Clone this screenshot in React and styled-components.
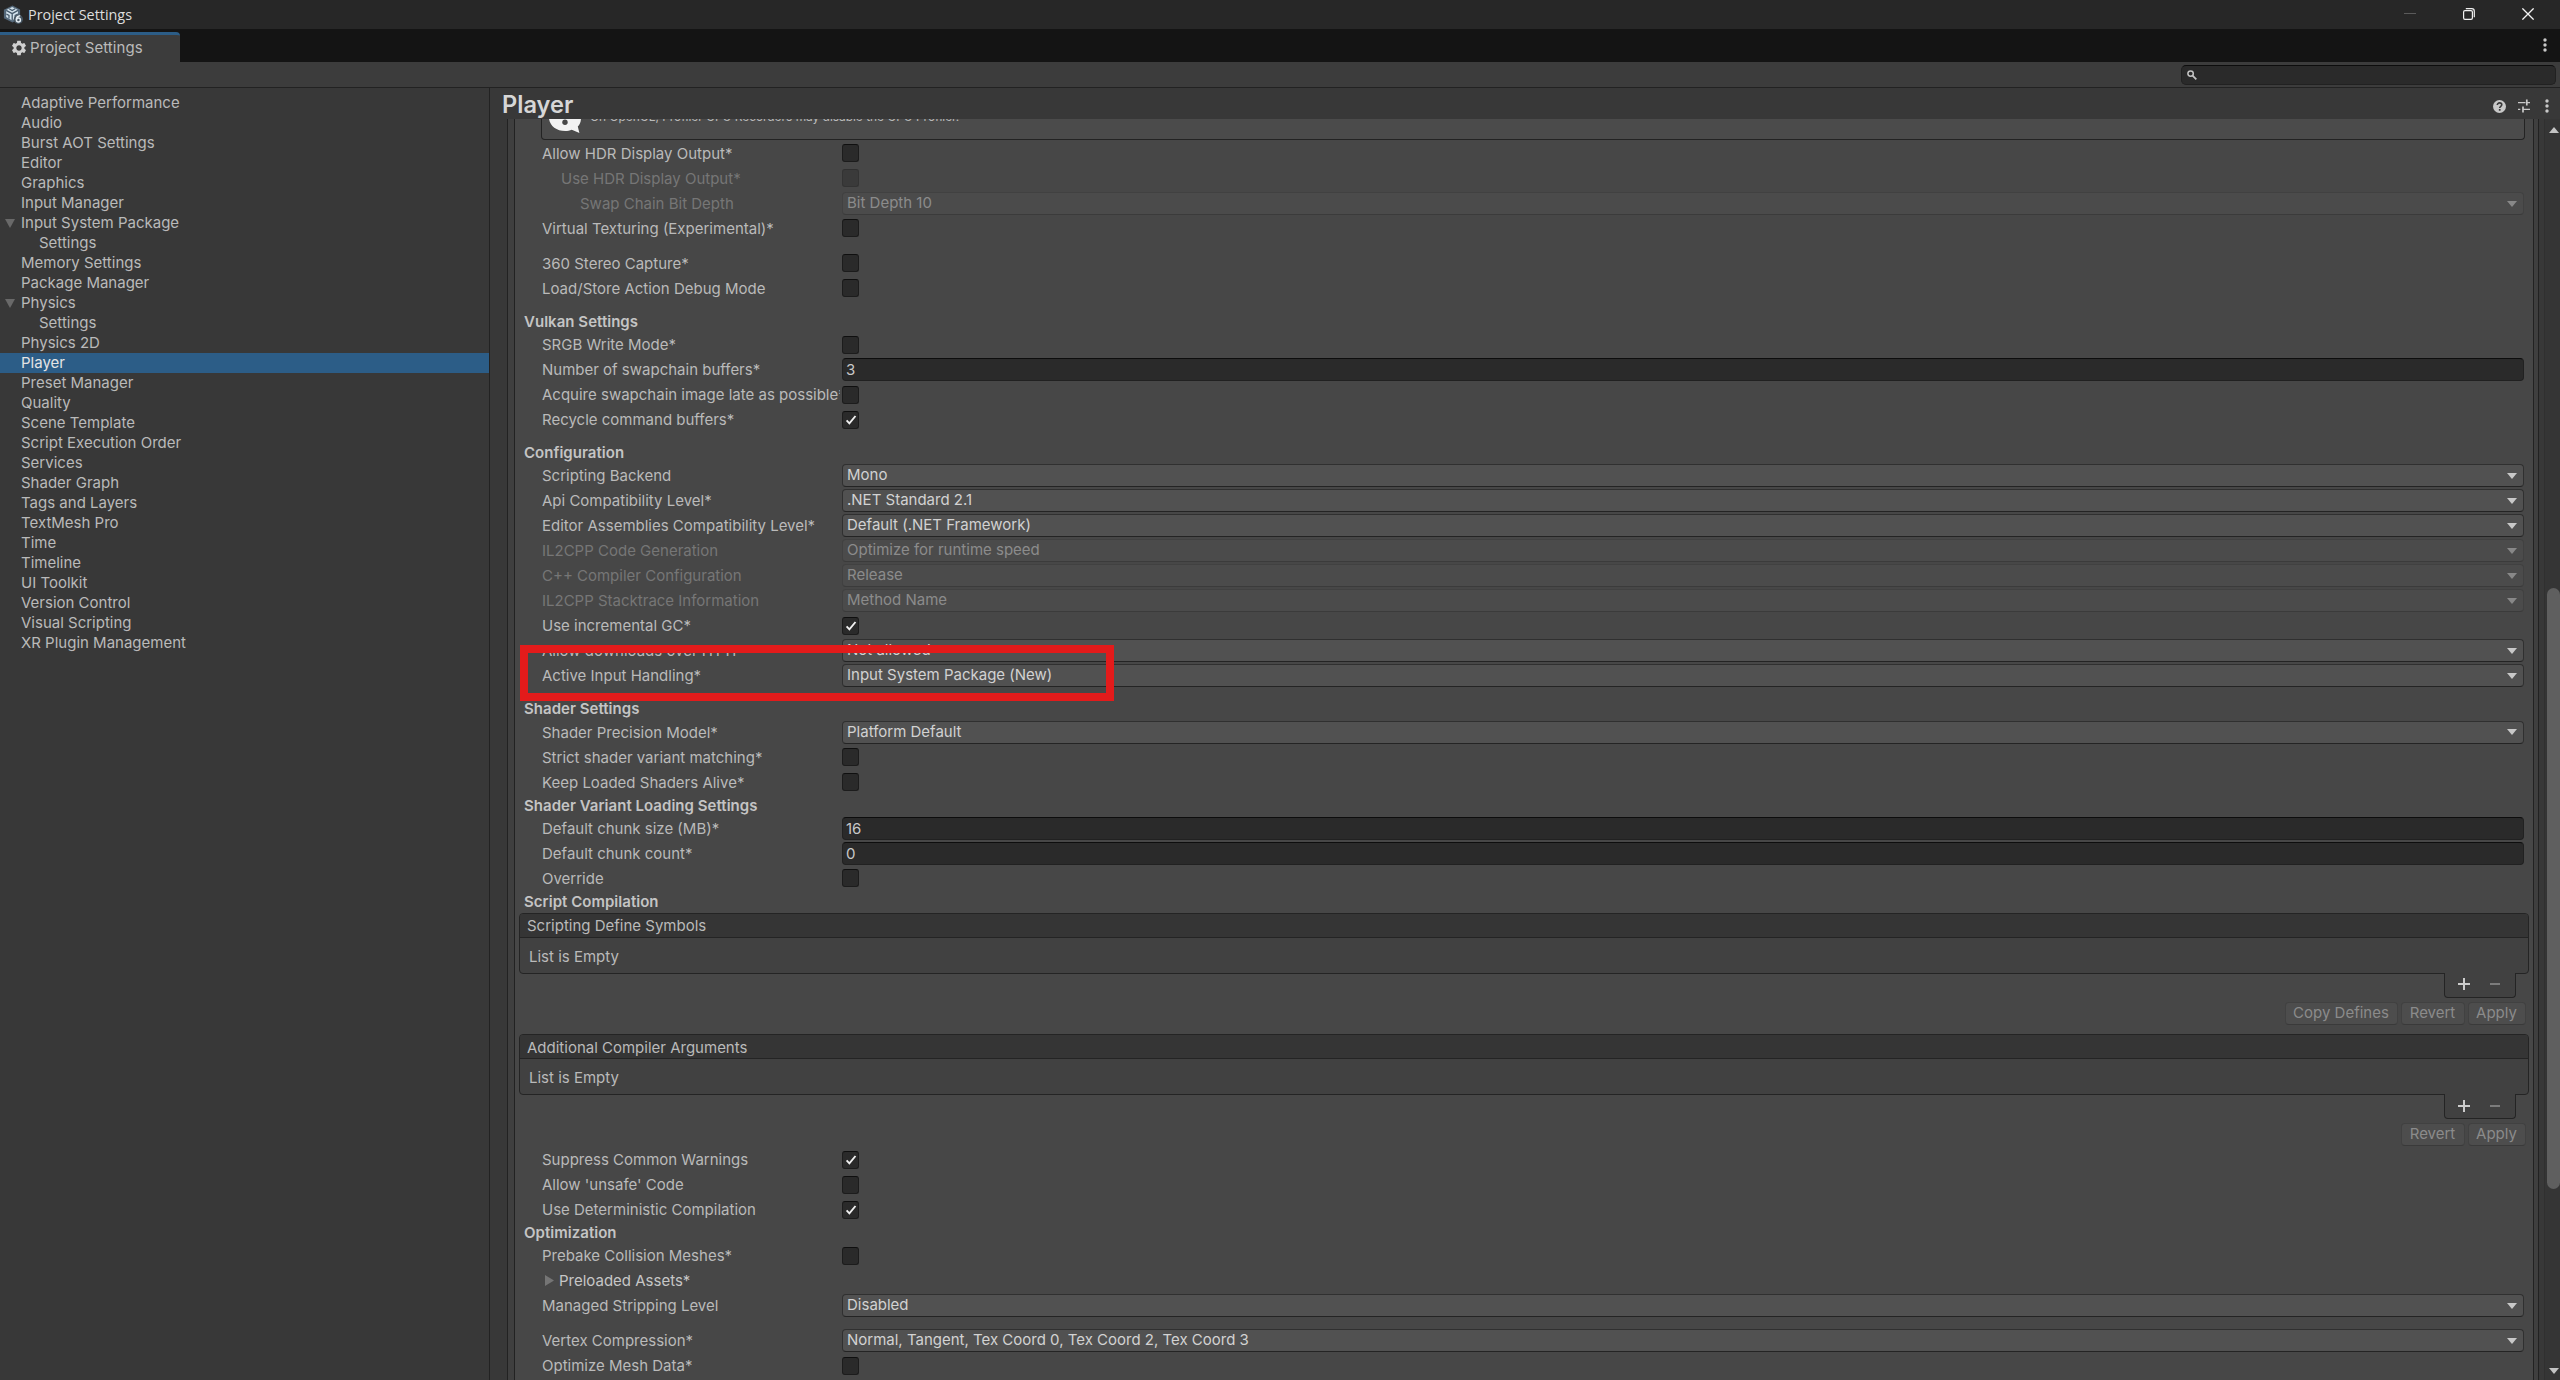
import styled, { createGlobalStyle, css } from 'styled-components';
import { MdSettings } from 'react-icons/md';

const colors = {
   titleBar: '#272727',
   tabBar: '#141414',
   toolbar: '#3c3c3c',
   panel: '#383838',
   frame: '#3f3f3f',
   inner: '#474747',
   line: '#222222',
   text: '#bababa',
   bright: '#d2d2d2',
   muted: '#767676',
   accent: '#2c5d87',
   mark: '#e31b1b',
};

const GlobalStyle = createGlobalStyle`
   * {
      box-sizing: border-box;
   }

   body {
      margin: 0;
      background: ${colors.panel};
      color: ${colors.text};
      font-family: Inter, 'Liberation Sans', sans-serif;
      font-size: 15px;
      overflow: hidden;
   }

   svg {
      display: block;
      flex: none;
   }
`;

const Window = styled.div`
   display: flex;
   flex-direction: column;
   width: 2560px;
   height: 1380px;
   overflow: hidden;
`;

const TitleBar = styled.header`
   display: flex;
   align-items: center;
   height: 29px;
   padding: 0 26px 0 3px;
   background: ${colors.titleBar};
`;

const WindowTitle = styled.span`
   flex: 1;
   margin-left: 5px;
   color: #dedede;
   font-family: 'Open Sans', sans-serif;
   font-size: 14.4px;
   line-height: 28px;
`;

const WindowButtons = styled.div`
   display: flex;
   gap: 47px;
   margin-bottom: 1px;
`;

const TabBar = styled.div`
   display: flex;
   align-items: flex-end;
   justify-content: space-between;
   height: 33px;
   padding-right: 13px;
   background: ${colors.tabBar};
`;

const Tab = styled.div`
   display: flex;
   align-items: center;
   width: 180px;
   height: 30px;
   padding: 0 0 1px 10px;
   border-top: 3px solid ${colors.accent};
   border-radius: 0 4px 0 0;
   background: ${colors.toolbar};
   line-height: 25px;

   span {
      margin-left: 2px;
      padding-bottom: 2px;
      letter-spacing: 0.08px;
   }
`;

const TabMenu = styled.div`
   display: flex;
   align-items: center;
   height: 34px;
`;

const Toolbar = styled.div`
   display: flex;
   justify-content: flex-end;
   height: 26px;
   padding: 3px 4px 0 0;
   border-bottom: 1px solid ${colors.line};
   background: ${colors.toolbar};
`;

const Search = styled.div`
   display: flex;
   align-items: center;
   width: 375px;
   height: 20px;
   padding-left: 5px;
   border: 1px solid #212121;
   border-top-color: #0d0d0d;
   border-radius: 5px;
   background: #2a2a2a;
`;

const Body = styled.div`
   display: flex;
   flex: 1;
   min-height: 0;
`;

const Sidebar = styled.nav`
   width: 490px;
   padding-top: 5px;
   border-right: 1px solid ${colors.line};
`;

const SidebarItem = styled.div`
   display: flex;
   align-items: center;
   height: 20px;
   padding-left: ${props => (props.$child ? 39 : 5)}px;
   line-height: 20px;
   ${props => props.$active && css`
      background: ${colors.accent};
      color: #e4e4e4;
   `}
`;

const Foldout = styled.span`
   width: 16px;
`;

const Main = styled.main`
   display: flex;
   flex: 1;
   flex-direction: column;
   min-width: 0;
`;

const MainHeader = styled.div`
   display: flex;
   align-items: center;
   height: 31px;
   padding: 2px 11px 0 12px;

   h1 {
      flex: 1;
      margin: 0;
      color: #d6d6d6;
      font-size: 23.6px;
      font-weight: 600;
      line-height: 29px;
   }
`;

const HeaderIcons = styled.div`
   display: flex;
   align-items: center;
   padding-top: 3px;

   svg + svg {
      margin-left: 12px;
   }

   svg:last-child {
      margin-left: 15px;
   }
`;

const ScrollArea = styled.div`
   display: flex;
   flex: 1;
   min-height: 0;
   padding-left: 17px;
`;

const OuterFrame = styled.div`
   flex: 1;
   min-width: 0;
   padding: 0 4px 0 6px;
   border: solid ${colors.line};
   border-width: 0 1px;
   background: ${colors.frame};
`;

const InnerFrame = styled.div`
   position: relative;
   height: 100%;
   border: solid ${colors.line};
   border-width: 0 1px;
   background: ${colors.inner};
   overflow: hidden;
`;

const Scrollbar = styled.div`
   display: flex;
   flex-direction: column;
   align-items: center;
   width: 16px;
   margin-left: 5px;
   padding: 8px 0 6px 2px;
   border-left: 1px solid #303030;
   background: #353535;
`;

const Thumb = styled.div`
   width: 13px;
   height: 601px;
   margin: 455px 0 auto;
   border-radius: 7px;
   background: #5f5f5f;
`;

const HelpBox = styled.div`
   display: flex;
   height: 21px;
   margin: 0 8px 2px 26px;
   padding-left: 7px;
   border: 1px solid #232323;
   border-top: none;
   border-radius: 0 0 4px 4px;
   background: #4b4b4b;
   overflow: hidden;

   p {
      margin: -10px 0 0 8px;
      font-size: 11.9px;
      line-height: 16px;
   }
`;

const Row = styled.div`
   display: flex;
   height: 25px;
   margin-top: ${props => props.$gap || 0}px;
   padding: 0 9px 0 27px;
   color: ${props => (props.$disabled ? colors.muted : colors.text)};
`;

const Label = styled.div`
   display: flex;
   flex: none;
   width: 298px;
   margin-right: 2px;
   padding-left: ${props => (props.$indent || 0) * 19}px;
   line-height: 23px;
   white-space: nowrap;
   overflow: hidden;
   ${props => props.$foldout && css`
      align-items: center;
      height: 23px;
      padding-left: 3px;
      gap: 5px;
      color: #c6c6c6;
   `}
`;

const CheckBox = styled.div`
   display: flex;
   align-items: center;
   justify-content: center;
   width: 17px;
   height: 18px;
   margin-top: 2.2px;
   border: 1px solid ${props => (props.$disabled ? '#333333' : '#1c1c1c')};
   border-top-color: ${props => (props.$disabled ? '#303030' : '#0f0f0f')};
   border-radius: 3px;
   background: ${props => (props.$disabled ? '#3a3a3a' : '#2a2a2a')};
`;

const Dropdown = styled.div`
   display: flex;
   flex: 1;
   align-items: center;
   justify-content: space-between;
   height: 23px;
   padding: 0 6px 0 4px;
   border: 1px solid ${props => (props.$disabled ? '#414141' : '#303030')};
   border-bottom-color: ${props => (props.$disabled ? '#3b3b3b' : '#242424')};
   border-radius: 4px;
   background: ${props => (props.$disabled ? '#4b4b4b' : '#515151')};
   color: ${props => (props.$disabled ? '#8b8b8b' : colors.bright)};
   line-height: 20px;

   span {
      height: 21px;
   }
`;

const NumberField = styled.div`
   flex: 1;
   height: 23px;
   padding-left: 3px;
   border: 1px solid #212121;
   border-top-color: #0d0d0d;
   border-radius: 4px;
   background: #2a2a2a;
   color: #c8c8c8;
   line-height: 22px;
`;

const Heading = styled.h2`
   height: 21px;
   margin: ${props => props.$gap || 0}px 0 0 9px;
   color: #c4c4c4;
   font-size: 15px;
   font-weight: 600;
   letter-spacing: 0.03px;
   line-height: 19px;
`;

const ListBox = styled.section`
   height: 61px;
   margin: ${props => props.$gap || 0}px 4px 0;
   border: 1px solid #242424;
   border-radius: 4px;
   background: #414141;
   line-height: 23px;
`;

const ListTitle = styled.div`
   height: 24px;
   padding: ${props => (props.$lowered ? 1 : 0)}px 0 0 7px;
   border-bottom: 1px solid #242424;
   border-radius: 3px 3px 0 0;
   background: #353535;
`;

const ListEmpty = styled.div`
   padding: 7px 0 0 9px;
`;

const ListFooter = styled.div`
   position: relative;
   display: flex;
   align-items: center;
   gap: 19px;
   width: 72px;
   height: 25px;
   margin: -1px 17px 0 auto;
   padding: 0 0 1px 12px;
   border: 1px solid #242424;
   border-top: none;
   border-radius: 0 0 4px 4px;
   background: #414141;
`;

const ButtonBar = styled.div`
   display: flex;
   justify-content: flex-end;
   gap: 3px;
   margin: ${props => props.$gap || 4.4}px 7.5px 0 0;
`;

const Button = styled.div`
   width: ${props => props.$width}px;
   height: 23px;
   border: 1px solid #414141;
   border-bottom-color: #3a3a3a;
   border-radius: 4px;
   background: #4d4d4d;
   color: #8b8b8b;
   line-height: 20px;
   text-align: center;
`;

// red marker drawn over the settings
const Highlight = styled.div`
   position: absolute;
   top: 526px;
   left: 5px;
   width: 594px;
   height: 56px;
   border: 8px solid ${colors.mark};
`;

const sidebarItems = [
   'Adaptive Performance',
   'Audio',
   'Burst AOT Settings',
   'Editor',
   'Graphics',
   'Input Manager',
   { name: 'Input System Package', open: true },
   { name: 'Settings', child: true },
   'Memory Settings',
   'Package Manager',
   { name: 'Physics', open: true },
   { name: 'Settings', child: true },
   'Physics 2D',
   { name: 'Player', active: true },
   'Preset Manager',
   'Quality',
   'Scene Template',
   'Script Execution Order',
   'Services',
   'Shader Graph',
   'Tags and Layers',
   'TextMesh Pro',
   'Time',
   'Timeline',
   'UI Toolkit',
   'Version Control',
   'Visual Scripting',
   'XR Plugin Management',
].map(item => (typeof item === 'string' ? { name: item } : item));

const displaySettings = [
   { label: 'Allow HDR Display Output*', checked: false },
   { label: 'Use HDR Display Output*', checked: false, indent: 1, disabled: true },
   { label: 'Swap Chain Bit Depth', option: 'Bit Depth 10', indent: 2, disabled: true },
   { label: 'Virtual Texturing (Experimental)*', checked: false },
   { label: '360 Stereo Capture*', checked: false, gap: 10 },
   { label: 'Load/Store Action Debug Mode', checked: false },
   { heading: 'Vulkan Settings', gap: 10.4 },
   { label: 'SRGB Write Mode*', checked: false },
   { label: 'Number of swapchain buffers*', value: '3' },
   { label: 'Acquire swapchain image late as possible*', checked: false },
   { label: 'Recycle command buffers*', checked: true },
   { heading: 'Configuration', gap: 10 },
   { label: 'Scripting Backend', option: 'Mono' },
   { label: 'Api Compatibility Level*', option: '.NET Standard 2.1' },
   { label: 'Editor Assemblies Compatibility Level*', option: 'Default (.NET Framework)' },
   { label: 'IL2CPP Code Generation', option: 'Optimize for runtime speed', disabled: true },
   { label: 'C++ Compiler Configuration', option: 'Release', disabled: true },
   { label: 'IL2CPP Stacktrace Information', option: 'Method Name', disabled: true },
   { label: 'Use incremental GC*', checked: true },
   { label: 'Allow downloads over HTTP*', option: 'Not allowed' },
   { label: 'Active Input Handling*', option: 'Input System Package (New)' },
   { heading: 'Shader Settings', gap: 10 },
   { label: 'Shader Precision Model*', option: 'Platform Default', gap: 0.5 },
   { label: 'Strict shader variant matching*', checked: false },
   { label: 'Keep Loaded Shaders Alive*', checked: false },
   { heading: 'Shader Variant Loading Settings' },
   { label: 'Default chunk size (MB)*', value: '16' },
   { label: 'Default chunk count*', value: '0' },
   { label: 'Override', checked: false },
   { heading: 'Script Compilation' },
];

const compilerSettings = [
   { label: 'Suppress Common Warnings', checked: true, gap: 2 },
   { label: "Allow 'unsafe' Code", checked: false },
   { label: 'Use Deterministic Compilation', checked: true },
   { heading: 'Optimization' },
   { label: 'Prebake Collision Meshes*', checked: false },
   { label: 'Preloaded Assets*', foldout: true },
   { label: 'Managed Stripping Level', option: 'Disabled' },
   { label: 'Vertex Compression*', option: 'Normal, Tangent, Tex Coord 0, Tex Coord 2, Tex Coord 3', gap: 10 },
   { label: 'Optimize Mesh Data*', checked: false },
];

const ArrowDown = ({ color = '#c4c4c4', width = 10, height = 6 }) => (
   <svg width={width} height={height} viewBox="0 0 10 6" preserveAspectRatio="none">
      <path d="M0 0h10L5 6z" fill={color} />
   </svg>
);

const ArrowUp = () => (
   <svg width="10" height="6" viewBox="0 0 10 6">
      <path d="M0 6h10L5 0z" fill="#c4c4c4" />
   </svg>
);

const ArrowRight = () => (
   <svg width="9" height="11" viewBox="0 0 9 11">
      <path d="M0 0v11l9-5.5z" fill="#757575" />
   </svg>
);

const Kebab = () => (
   <svg width="4" height="14" viewBox="0 0 4 14" fill="#c8c8c8">
      <circle cx="2" cy="2" r="1.7" />
      <circle cx="2" cy="7" r="1.7" />
      <circle cx="2" cy="12" r="1.7" />
   </svg>
);

const UnityIcon = () => (
   <svg width="20" height="20" viewBox="0 0 20 20">
      <path d="M9.5 0.6l7.6 4v8.8l-7.6 4.2-8.6-4.4V4.8z" fill="#54687a" />
      <path d="M9.2 2l5.8 3v7l-5.8 3.4L3.2 12V5z" fill="#d3e2ec" />
      <path d="M9.2 8.6v6.8M9.2 8.6l5.8-3.2M9.2 8.6L3.2 5.4M6.2 3.8l3 1.7 3-1.7M3.4 9l2.6 1.5v3M15 9l-2.8 1.5v3" fill="none" stroke="#465a6c" strokeWidth="1.3" />
      <circle cx="15.4" cy="14.3" r="4.6" fill="#465562" />
      <path d="M17.2 10.8c-2.6 0.2-3.8 1.8-3.8 3.9" fill="none" stroke="#e4edf3" strokeWidth="1.6" />
      <circle cx="15.4" cy="15" r="2" fill="none" stroke="#e4edf3" strokeWidth="1.5" />
   </svg>
);

const MinimizeIcon = () => (
   <svg width="12" height="12" viewBox="0 0 12 12">
      <path d="M0 5.5h12" stroke="#5a5a5a" />
   </svg>
);

const RestoreIcon = () => (
   <svg width="12" height="12" viewBox="0 0 12 12" fill="none" stroke="#f0f0f0" strokeWidth="1.2">
      <rect x="0.6" y="2.6" width="8.8" height="8.8" rx="1.4" />
      <path d="M2.8 0.7h6c1.5 0 2.5 1 2.5 2.5v6" />
   </svg>
);

const CloseIcon = () => (
   <svg width="12" height="12" viewBox="0 0 12 12">
      <path d="M0.4 0.4l11.2 11.2M11.6 0.4L0.4 11.6" stroke="#f4f4f4" strokeWidth="1.3" />
   </svg>
);

const SearchIcon = () => (
   <svg width="10" height="10" viewBox="0 0 10 10" fill="none" stroke="#c4c4c4">
      <circle cx="3.6" cy="3.6" r="2.7" strokeWidth="1.5" />
      <path d="M5.6 5.6l3.7 3.7" strokeWidth="1.8" />
   </svg>
);

const HelpIcon = () => (
   <svg width="13" height="13" viewBox="0 0 12 12">
      <circle cx="6" cy="6" r="6" fill="#c8c8c8" />
      <path d="M4 4.7c0-1.3 0.9-2 2.1-2s2 0.7 2 1.7c0 1.4-1.9 1.5-1.9 3" fill="none" stroke="#383838" strokeWidth="1.5" />
      <rect x="5.4" y="8.3" width="1.6" height="1.6" fill="#383838" />
   </svg>
);

const PresetIcon = () => (
   <svg width="12" height="14" viewBox="0 0 12 14" stroke="#c8c8c8" fill="none">
      <path d="M0 3.6h7.5M9 3.6h3M0 10.4h2.3M5 10.4h7" strokeWidth="1.3" />
      <path d="M8.8 0.6v6M5 7.4v6" strokeWidth="1.7" />
   </svg>
);

const CheckIcon = () => (
   <svg width="12" height="12" viewBox="0 0 12 12">
      <path d="M1.6 6.3l2.8 3L10.5 2" fill="none" stroke="#f0f0f0" strokeWidth="1.9" />
   </svg>
);

const BubbleIcon = () => (
   <svg width="33" height="15" viewBox="0 0 33 15">
      <path d="M0 0h32c-0.2 3.4-1.6 6-3.2 7.6l1.6 6.4-7.6-3.2c-2 0.9-4.3 1.3-6.5 1.3C7.5 12.1 1.2 7 0 0z" fill="#f2f2f2" />
      <circle cx="16" cy="3.3" r="2.7" fill="#474747" />
   </svg>
);

const PlusIcon = () => (
   <svg width="14" height="14" viewBox="0 0 14 14">
      <path d="M1 7h12M7 1v12" stroke="#cccccc" strokeWidth="2" />
   </svg>
);

const MinusIcon = () => (
   <svg width="10" height="14" viewBox="0 0 10 14">
      <path d="M0 7h10" stroke="#7c7c7c" strokeWidth="2" />
   </svg>
);

const Field = ({ item }) => {
   if (item.option) {
      return (
         <Dropdown $disabled={item.disabled}>
            <span>{item.option}</span>
            <ArrowDown color={item.disabled ? '#888888' : '#c8c8c8'} />
         </Dropdown>
      );
   }
   if (item.value) {
      return <NumberField>{item.value}</NumberField>;
   }
   if (item.foldout) {
      return null;
   }
   return <CheckBox $disabled={item.disabled}>{item.checked && <CheckIcon />}</CheckBox>;
};

const Settings = ({ items }) =>
   items.map(item =>
      item.heading ? (
         <Heading key={item.heading} $gap={item.gap}>
            {item.heading}
         </Heading>
      ) : (
         <Row key={item.label} $gap={item.gap} $disabled={item.disabled}>
            <Label $indent={item.indent} $foldout={item.foldout}>
               {item.foldout && <ArrowRight />}
               {item.label}
            </Label>
            <Field item={item} />
         </Row>
      )
   );

const EmptyList = ({ title, gap, lowered }) => (
   <>
      <ListBox $gap={gap}>
         <ListTitle $lowered={lowered}>{title}</ListTitle>
         <ListEmpty>List is Empty</ListEmpty>
      </ListBox>
      <ListFooter>
         <PlusIcon />
         <MinusIcon />
      </ListFooter>
   </>
);

export default function App() {
   return (
      <Window>
         <GlobalStyle />
         <TitleBar>
            <UnityIcon />
            <WindowTitle>Project Settings</WindowTitle>
            <WindowButtons>
               <MinimizeIcon />
               <RestoreIcon />
               <CloseIcon />
            </WindowButtons>
         </TitleBar>
         <TabBar>
            <Tab>
               <MdSettings size={18} color="#d0d0d0" />
               <span>Project Settings</span>
            </Tab>
            <TabMenu>
               <Kebab />
            </TabMenu>
         </TabBar>
         <Toolbar>
            <Search>
               <SearchIcon />
            </Search>
         </Toolbar>
         <Body>
            <Sidebar>
               {sidebarItems.map((item, index) => (
                  <SidebarItem key={index} $child={item.child} $active={item.active}>
                     {!item.child && (
                        <Foldout>{item.open && <ArrowDown color="#696969" height={9} />}</Foldout>
                     )}
                     {item.name}
                  </SidebarItem>
               ))}
            </Sidebar>
            <Main>
               <MainHeader>
                  <h1>Player</h1>
                  <HeaderIcons>
                     <HelpIcon />
                     <PresetIcon />
                     <Kebab />
                  </HeaderIcons>
               </MainHeader>
               <ScrollArea>
                  <OuterFrame>
                     <InnerFrame>
                        <HelpBox>
                           <BubbleIcon />
                           <p>On OpenGL, Profiler GPU Recorders may disable the GPU Profiler.</p>
                        </HelpBox>
                        <Settings items={displaySettings} />
                        <EmptyList title="Scripting Define Symbols" />
                        <ButtonBar>
                           <Button $width={113}>Copy Defines</Button>
                           <Button $width={64}>Revert</Button>
                           <Button $width={58}>Apply</Button>
                        </ButtonBar>
                        <EmptyList title="Additional Compiler Arguments" gap={9.1} lowered />
                        <ButtonBar $gap={4}>
                           <Button $width={64}>Revert</Button>
                           <Button $width={58}>Apply</Button>
                        </ButtonBar>
                        <Settings items={compilerSettings} />
                        <Highlight />
                     </InnerFrame>
                  </OuterFrame>
                  <Scrollbar>
                     <ArrowUp />
                     <Thumb />
                     <ArrowDown />
                  </Scrollbar>
               </ScrollArea>
            </Main>
         </Body>
      </Window>
   );
}
